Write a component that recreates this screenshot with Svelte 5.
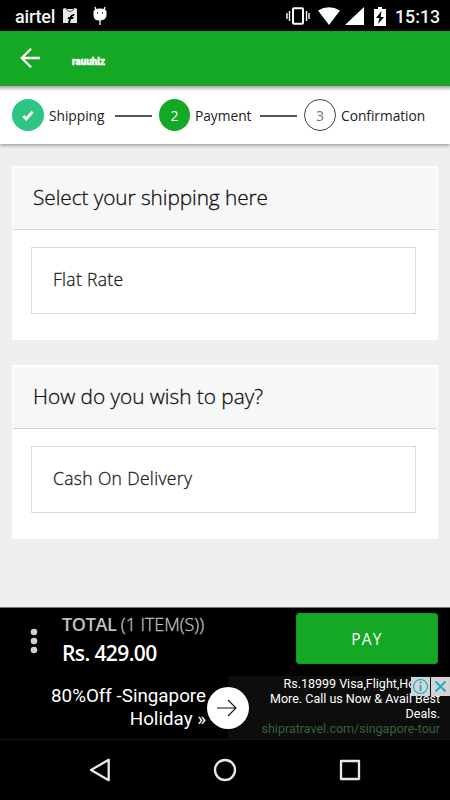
<script>
let steps = [
	{ label: 'Shipping', state: 'done' },
	{ label: 'Payment', state: 'active' },
	{ label: 'Confirmation', state: 'todo' },
];

let sections = [
	{ title: 'Select your shipping here', option: 'Flat Rate', titleWidth: 235, optionWidth: 70 },
	{ title: 'How do you wish to pay?', option: 'Cash On Delivery', titleWidth: 230, optionWidth: 139 },
];
</script>

<div class="screen">
	<div class="status">
		<span class="carrier">airtel</span>
		<svg class="bag" width="16" height="16" viewBox="0 0 16 16">
			<path d="M1 1l2-1 2 1h6l2-1 2 1v14H1z" fill="#e8e8e8" />
			<path d="M4 1q4 5 8 0" fill="none" stroke="#333" stroke-width=".8" />
			<path d="M6 15l1-4H5.5l1-2h1.3q1-3 5-3l-1 2q-2 0-2 1h2l-1 2H9l-1 4z" fill="#000" />
		</svg>
		<svg class="droid" width="14" height="21" viewBox="0 0 14 21">
			<path d="M3 4L2 1M11 4l1-3M7 13v6" stroke="#fff" stroke-width="1.3" />
			<path d="M.5 6q0-3.5 6.5-3.5T13.5 6v3q0 5-6.5 5.500T.5 9z" fill="#fff" />
			<circle cx="4.5" cy="7" r=".7" />
			<circle cx="9.5" cy="7" r=".7" />
		</svg>
		<span class="grow"></span>
		<svg class="vibrate" width="24" height="18" viewBox="0 0 24 18">
			<path d="M1 6v6M3.5 4v10M20.5 4v10M23 6v6" stroke="#fff" stroke-width="1.4" />
			<rect x="7" y="1.3" width="10" height="15.4" rx="1" fill="none" stroke="#fff" stroke-width="2" />
		</svg>
		<svg class="wifi" width="22" height="18" viewBox="0 0 22 18">
			<path d="M0 3.6Q11-3.2 22 3.6L11 18z" fill="#fff" />
		</svg>
		<svg class="signal" width="19" height="18" viewBox="0 0 19 18">
			<path d="M0 18L19 0v18z" fill="#fff" />
		</svg>
		<svg class="battery" width="12" height="19" viewBox="0 0 12 19">
			<path d="M0 2h4V0h4v2h4v17H0z" fill="#fff" />
			<path d="M7.5 4L2 11h3.5L4 17l6-7H6.6z" />
		</svg>
		<span class="clock">15:13</span>
	</div>

	<header>
		<svg width="20" height="20" viewBox="0 0 20 20" fill="none" stroke="#fff" stroke-width="2.3">
			<path d="M20 10H2M11 .8L1.8 10l9.2 9.2" />
		</svg>
		<svg class="brand" width="36" height="12" viewBox="0 0 36 12">
			<text x="1" y="9.5" textLength="33" lengthAdjust="spacingAndGlyphs">rauuhlz</text>
		</svg>
	</header>

	<nav class="steps">
		{#each steps as step, i}
			{#if i > 0}<i class="line"></i>{/if}
			<span class="dot {step.state}">
				{#if step.state == 'done'}
					<svg width="12" height="11" viewBox="0 0 12 11">
						<path d="M1.3 6l3 3L10.6 1.6" fill="none" stroke="#fff" stroke-width="2.8" />
					</svg>
				{:else}
					{i + 1}
				{/if}
			</span>
			<span class="label {step.state}">{step.label}</span>
		{/each}
	</nav>

	<main>
		{#each sections as section}
			<section>
				<h2>
					<svg width="300" height="34">
						<text x="0" y="23" textLength={section.titleWidth}>{section.title}</text>
					</svg>
				</h2>
				<button class="option">
					<svg width="200" height="28">
						<text x="0" y="19" textLength={section.optionWidth}>{section.option}</text>
					</svg>
				</button>
			</section>
		{/each}
	</main>

	<div class="total">
		<svg class="more" width="8" height="26" viewBox="0 0 8 26" fill="#d0d0d0">
			<circle cx="4" cy="4" r="3.3" />
			<circle cx="4" cy="13" r="3.3" />
			<circle cx="4" cy="22" r="3.3" />
		</svg>
		<div class="sum">
			<div class="items"><b>TOTAL</b> <span>(1 ITEM(S))</span></div>
			<div class="price">Rs. 429.00</div>
		</div>
		<button class="pay">PAY</button>
	</div>

	<div class="ad">
		<div class="headline">80%Off -Singapore<br>Holiday »</div>
		<div class="details">
			Rs.18999 Visa,Flight,Hotel &amp;<br>More. Call us Now &amp; Avail Best<br>Deals.
			<div class="link">shipratravel.com/singapore-tour</div>
		</div>
		<svg class="go" width="42" height="42" viewBox="0 0 42 42">
			<circle cx="21" cy="21" r="21" fill="#fff" />
			<path d="M10 21h19M21 13l8 8-8 8" fill="none" stroke="#111" stroke-width="1.1" />
		</svg>
		<div class="choices">
			<svg width="19" height="19" viewBox="0 0 19 19" fill="none" stroke="#16aed0">
				<circle cx="9.5" cy="9.5" r="7" stroke-width="1.2" />
				<path d="M9.5 8v6M9.5 4.5v2" stroke-width="1.8" />
			</svg>
			<svg width="19" height="19" viewBox="0 0 19 19" fill="none" stroke="#16aed0">
				<path d="M4.5 4.5l10 10M14.5 4.5l-10 10" stroke-width="1.8" />
			</svg>
		</div>
	</div>

	<div class="softkeys">
		<svg width="22" height="24" viewBox="0 0 22 24"><path d="M19.7 1.8v20.4L2 12z" /></svg>
		<svg width="24" height="24" viewBox="0 0 24 24"><circle cx="12" cy="12" r="10" /></svg>
		<svg width="22" height="22" viewBox="0 0 22 22"><rect x="2" y="2" width="18" height="18" /></svg>
	</div>
</div>

<style>
	.screen {
		width: 450px;
		height: 800px;
		display: flex;
		flex-direction: column;
		overflow: hidden;
		background: #efefef;
		font-family: "Open Sans", sans-serif;
	}
	svg {
		display: block;
		flex: none;
	}
	button {
		margin: 0;
		font-family: inherit;
	}
	.status {
		height: 31px;
		flex: none;
		display: flex;
		align-items: center;
		box-sizing: border-box;
		padding: 1px 10px 0 15px;
		background: #000;
		color: #f2f2f2;
		font: 500 18px/30px Roboto, sans-serif;
	}
	.carrier {
		width: 47px;
		padding-top: 2px;
		font-size: 18px;
		letter-spacing: -.2px;
	}
	.droid { margin: 0 0 0 15px; }
	.grow { flex: 1; }
	.vibrate { margin-right: 1px; }
	.wifi { margin-left: 7px; }
	.signal { margin-left: 5px; }
	.battery { margin-left: 10px; }
	.clock {
		width: 45px;
		margin-left: 9px;
		padding-top: 2px;
		font-size: 17.8px;
		white-space: nowrap;
	}
	header {
		height: 55px;
		flex: none;
		display: flex;
		align-items: center;
		padding-left: 20px;
		background: #15a825;
		border-bottom: 1px solid #08a00c;
		box-sizing: border-box;
	}
	.brand {
		margin: 5px 0 0 31px;
		font: 900 10.5px Roboto, sans-serif;
		fill: #fff;
		stroke: #fff;
		stroke-width: .4px;
	}
	.steps {
		height: 58px;
		flex: none;
		display: flex;
		align-items: center;
		box-sizing: border-box;
		padding: 0 0 0 12px;
		background: linear-gradient(#aaa, #fff 5px);
		box-shadow: 0 1px 4px #888;
		font-size: 14px;
		color: #222;
	}
	.dot {
		width: 32px;
		height: 32px;
		flex: none;
		display: flex;
		align-items: center;
		justify-content: center;
		box-sizing: border-box;
		border-radius: 50%;
	}
	.dot.done { background: #2dc583; }
	.dot.active {
		width: 31px;
		background: #15a825;
		color: #fff;
	}
	.dot.todo {
		border: 1px solid #444;
		color: #777;
	}
	.label {
		margin-left: 5px;
		font-size: 13.8px;
		letter-spacing: -.05px;
		white-space: nowrap;
	}
	.label.done { width: 56px; }
	.label.active { width: 55px; }
	.line {
		width: 37px;
		height: 2px;
		flex: none;
		margin: 2px 7px 0 10px;
		background: #555;
	}
	main {
		flex: 1;
		padding: 22px 12px 0;
	}
	section {
		height: 174px;
		box-sizing: border-box;
		margin-bottom: 25px;
		padding: 2px 1px 0;
		background: #fff;
	}
	h2 {
		height: 62px;
		display: flex;
		align-items: center;
		box-sizing: border-box;
		margin: 0;
		padding-left: 20px;
		background: #f7f7f7;
		border-bottom: 1px solid #d5d5d5;
		font-weight: 300;
		font-size: 20.8px;
		fill: #111;
		stroke: #111;
		stroke-width: .3px;
	}
	.option {
		width: 385px;
		height: 67px;
		display: flex;
		align-items: center;
		box-sizing: border-box;
		margin: 17px 0 0 18px;
		padding: 0 0 0 21px;
		background: #fff;
		border: 1px solid #dcdcdc;
		font-weight: 300;
		font-size: 17.5px;
		fill: #222;
		stroke: #222;
		stroke-width: .3px;
	}
	.total {
		height: 70px;
		flex: none;
		display: flex;
		box-sizing: border-box;
		border-top: 1px solid #777;
		background: #000;
	}
	.more { margin: 20px 0 0 30px; }
	.sum {
		width: 234px;
		margin: 4px 0 0 24px;
		white-space: nowrap;
	}
	.items {
		color: #c0c0c0;
		font-size: 18px;
		font-weight: 300;
		line-height: 24px;
		letter-spacing: -.35px;
	}
	.items b { font-weight: 600; }
	.items span {
		letter-spacing: -.05px;
		-webkit-text-stroke: .3px #c0c0c0;
	}
	.price {
		color: #fff;
		font-size: 21px;
		font-weight: 600;
		line-height: 34px;
		letter-spacing: -.6px;
	}
	.pay {
		width: 142px;
		height: 51px;
		margin-top: 5px;
		padding: 0;
		border: 1px solid #119b20;
		border-radius: 3px;
		background: #15a825;
		color: #fff;
		font-size: 15.5px;
		letter-spacing: 1.2px;
	}
	.ad {
		position: relative;
		height: 62px;
		flex: none;
		display: flex;
		background: #000;
		border-bottom: 1px solid #151515;
		color: #fff;
		font-family: Roboto, sans-serif;
	}
	.headline {
		width: 206px;
		margin-right: 22px;
		padding-top: 8px;
		font-size: 18.8px;
		line-height: 22.5px;
		text-align: right;
		white-space: nowrap;
	}
	.details {
		flex: 1;
		margin-top: -1px;
		padding-right: 10px;
		background: #0d0d0d;
		font-size: 12.5px;
		line-height: 15px;
		text-align: right;
		white-space: nowrap;
	}
	.link { color: #35603a; }
	.go {
		position: absolute;
		left: 207px;
		top: 10px;
	}
	.choices {
		position: absolute;
		right: 0;
		top: 0;
		display: flex;
		gap: 1px;
	}
	.choices svg { background: #d4d4d4; }
	.softkeys {
		height: 60px;
		flex: none;
		display: flex;
		align-items: center;
		justify-content: space-between;
		box-sizing: border-box;
		padding: 0 89px;
		background: #000;
		fill: none;
		stroke: #e8e8e8;
		stroke-width: 2.3px;
		stroke-linejoin: round;
	}
</style>
